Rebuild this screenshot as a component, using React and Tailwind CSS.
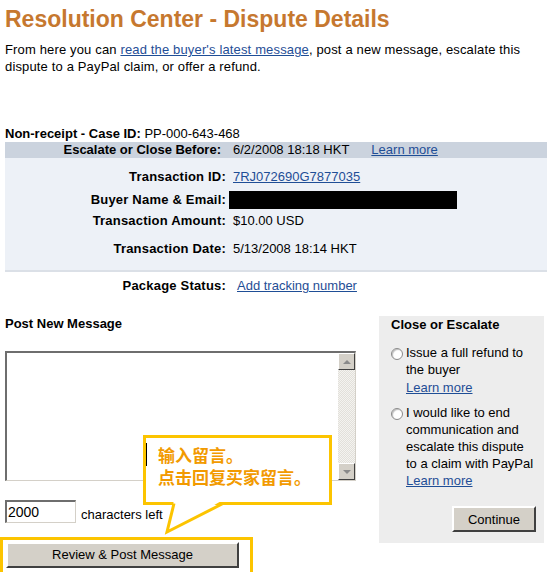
import React from 'react';

const link = 'text-[#1f4e96] underline';

const Radio = () => (
  <span className="mt-[4px] h-[12px] w-[12px] shrink-0 rounded-full border border-[#8a8a8a] bg-white shadow-[inset_1px_1px_1px_rgba(0,0,0,0.25)]" />
);

const RaisedButton = ({ className, children }) => (
  <button
    className={`flex items-center justify-center bg-[#d4d0c8] text-[13px] text-black border-t-2 border-l-2 border-t-white border-l-white border-b-2 border-r-2 border-b-[#404040] border-r-[#404040] ${className}`}
  >
    {children}
  </button>
);

const Row = ({ label, className, children }) => (
  <div className={`flex h-[18px] items-center ${className}`}>
    <div className="w-[221px] text-right font-bold tracking-[0.2px]">{label}</div>
    <div className="flex items-center pl-[7px]">{children}</div>
  </div>
);

export default function App() {
  return (
    <div
      className="relative h-[572px] w-[559px] overflow-hidden bg-white text-[13px] text-black"
      style={{ fontFamily: '"Liberation Sans", Arial, sans-serif' }}
    >
      <div className="px-[5px]">
        <h1 className="mt-[7px] h-[24px] text-[23px] font-bold leading-[24px] text-[#c6782f]">
          Resolution Center - Dispute Details
        </h1>
        <p className="mt-[10px] leading-[17px] tracking-[0.15px]">
          From here you can <span className={link}>read the buyer's latest message</span>, post a new message, escalate this
          <br />
          dispute to a PayPal claim, or offer a refund.
        </p>

        <div className="mt-[50px] h-[17px] leading-[17px]">
          <span className="font-bold">Non-receipt - Case ID:</span> PP-000-643-468
        </div>

        <div className="w-[542px]">
          <div className="flex h-[16px] items-center bg-[#cbd3de]">
            <div className="w-[216px] text-right font-bold">Escalate or Close Before:</div>
            <div className="pl-[12px]">6/2/2008 18:18 HKT</div>
            <div className={`pl-[22px] ${link}`}>Learn more</div>
          </div>
          <div className="h-[112px] bg-[#edf1f7] pt-[10px]">
            <Row label="Transaction ID:">
              <span className={link}>7RJ072690G7877035</span>
            </Row>
            <Row label="Buyer Name &amp; Email:" className="mt-[5px]">
              <span className="-ml-[4px] block h-[18px] w-[228px] bg-black" />
            </Row>
            <Row label="Transaction Amount:" className="mt-[3px]">
              $10.00 USD
            </Row>
            <Row label="Transaction Date:" className="mt-[10px]">
              5/13/2008 18:14 HKT
            </Row>
          </div>
          <div className="h-[2px] bg-[#dbe0e7]" />
          <Row label="Package Status:" className="mt-[5px]">
            <span className={`pl-[4px] ${link}`}>Add tracking number</span>
          </Row>
        </div>

        <div className="mt-[21px] flex">
          <div className="w-[374px]">
            <div className="h-[16px] font-bold leading-[16px]">Post New Message</div>
            <div className="mt-[19px] flex h-[130px] w-[351px] border-t-2 border-l-2 border-t-[#6e6e6e] border-l-[#6e6e6e] border-b border-r border-b-[#d4d0c8] border-r-[#d4d0c8] bg-white">
              <div className="flex-1" />
              <div className="flex w-[17px] flex-col bg-[#ebe9e4]">
                <div className="flex h-[17px] items-center justify-center bg-[#d4d0c8] border border-t-white border-l-white border-b-[#404040] border-r-[#404040]">
                  <span className="h-0 w-0 border-x-[4px] border-b-[4px] border-x-transparent border-b-[#8a8a8a]" />
                </div>
                <div className="flex-1 bg-[repeating-conic-gradient(#e2e0da_0_25%,#f4f3f0_0_50%)] bg-[length:2px_2px]" />
                <div className="flex h-[17px] items-center justify-center bg-[#d4d0c8] border border-t-white border-l-white border-b-[#404040] border-r-[#404040]">
                  <span className="h-0 w-0 border-x-[4px] border-t-[4px] border-x-transparent border-t-[#8a8a8a]" />
                </div>
              </div>
            </div>
            <div className="mt-[18px] flex items-center">
              <div className="flex h-[23px] w-[71px] items-center border-t-2 border-l-2 border-t-[#6e6e6e] border-l-[#6e6e6e] border-b border-r border-b-[#d4d0c8] border-r-[#d4d0c8] bg-white pl-[1px] text-[14px]">
                2000
              </div>
              <span className="ml-[5px] mt-[6px]">characters left</span>
            </div>
            <RaisedButton className="ml-[1px] mt-[17px] h-[26px] w-[233px]">Review &amp; Post Message</RaisedButton>
          </div>

          <div className="h-[227px] w-[165px] bg-[#ededed] pl-[12px] pr-[8px] leading-[17px]">
            <div className="h-[17px] font-bold">Close or Escalate</div>
            <div className="mt-[11px] flex gap-[3px]">
              <Radio />
              <div>
                <div>Issue a full refund to</div>
                <div>the buyer</div>
                <div className={`mt-[1px] ${link}`}>Learn more</div>
              </div>
            </div>
            <div className="mt-[8px] flex gap-[3px]">
              <Radio />
              <div>
                <div>I would like to end</div>
                <div>communication and</div>
                <div>escalate this dispute</div>
                <div>to a claim with PayPal</div>
                <div className={link}>Learn more</div>
              </div>
            </div>
            <div className="mt-[17px] flex justify-end">
              <RaisedButton className="h-[26px] w-[84px]">Continue</RaisedButton>
            </div>
          </div>
        </div>
      </div>

      {/* highlight frame around the post button */}
      <div className="absolute left-0 top-[537px] h-[50px] w-[253px] border-[3px] border-[#fcc400]" />

      {/* callout */}
      <div className="absolute left-[143px] top-[435px] h-[70px] w-[189px] border-[3px] border-[#fcc400] bg-white">
        <div className="absolute left-[0px] top-[5px] h-[23px] w-[1px] bg-black" />
        <div
          className="pl-[12px] pt-[6px] text-[17px] font-bold leading-[22px] text-[#f29a00]"
          style={{ fontFamily: '"Noto Sans CJK SC", sans-serif' }}
        >
          <div>输入留言。</div>
          <div>点击回复买家留言。</div>
        </div>
      </div>
      <svg className="absolute left-[143px] top-[500px]" width="100" height="40">
        <polygon points="31,0 24,32 80,0" fill="white" />
        <polyline points="31,3.5 24,32 80,3.5" fill="none" stroke="#fcc400" strokeWidth="3" />
      </svg>
    </div>
  );
}
